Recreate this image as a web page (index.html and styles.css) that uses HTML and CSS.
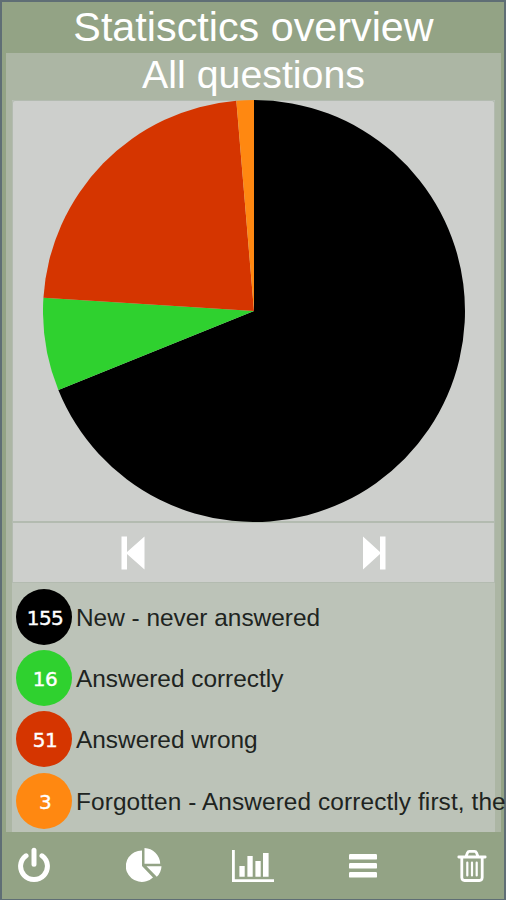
FILE: index.html
```
<!DOCTYPE html>
<html lang="en">
<head>
    <meta charset="UTF-8">
    <title>Statisctics overview</title>
    <link rel="stylesheet" href="styles.css">
</head>
<body>
    <div class="app">
        <h1>Statisctics overview</h1>

        <div class="panel">
            <h2>All questions</h2>
            <div class="content">
                <div class="chart">
                    <svg class="pie" viewBox="-100 -100 200 200">
                        <path fill="#000" d="M0 0V-100A100 100 0 1 1 -92.72 37.46Z"/>
                        <path fill="#2fd12f" d="M0 0L-92.72 37.46A100 100 0 0 1 -99.8 -6.28Z"/>
                        <path fill="#d53500" d="M0 0L-99.8 -6.28A100 100 0 0 1 -8.37 -99.65Z"/>
                        <path fill="#ff8811" d="M0 0L-8.37 -99.65A100 100 0 0 1 0 -100Z"/>
                    </svg>
                </div>

                <div class="nav">
                    <button>
                        <svg width="24" height="34" viewBox="0 0 24 34"><path d="M0.5 0.5h5.5v15.5L23.5 0.5v33L6 18v15.5H0.5z"/></svg>
                    </button>
                    <button>
                        <svg width="24" height="34" viewBox="0 0 24 34"><path d="M23.5 0.5H18v15.5L1 0.5v33L18 18v15.5h5.5z"/></svg>
                    </button>
                </div>

                <ul class="legend">
                    <li><span class="badge new">155</span><span class="label">New - never answered</span></li>
                    <li><span class="badge correct">16</span><span class="label">Answered correctly</span></li>
                    <li><span class="badge wrong">51</span><span class="label">Answered wrong</span></li>
                    <li><span class="badge forgotten">3</span><span class="label long">Forgotten - Answered correctly first, the</span></li>
                </ul>
            </div>
        </div>

        <div class="toolbar">
            <!-- Power -->
            <button>
                <svg width="32" height="38" viewBox="0 0 32 38"><path class="line" stroke-width="5" d="M8 8.8a13.4 13.2 0 1 0 16 0M16 3.2v14"/></svg>
            </button>
            <!-- Pie chart -->
            <button>
                <svg width="36" height="38" viewBox="0 0 36 38"><path d="M16 3.5V19L27 30.4A16 15.7 0 1 1 16 3.5zM18.5 1A16.5 16.5 0 0 1 34.2 16.7H18.5zM20.5 19.2h15a16 16 0 0 1-4.7 10.6z"/></svg>
            </button>
            <!-- Bar chart -->
            <button>
                <svg width="44" height="34" viewBox="0 0 44 34"><path d="M1 1h2.8v29.3H43V33H1zM8.4 17h5.3v10.8H8.4zM16.4 7h5.3v20.8h-5.3zM24.4 12h5.3v15.8h-5.3zM32 4h5.6v23.8H32z"/></svg>
            </button>
            <!-- Menu -->
            <button>
                <svg width="28" height="24" viewBox="0 0 28 24"><rect width="28" height="5.6" y="0" rx="1.2"/><rect width="28" height="5.6" y="9" rx="1.2"/><rect width="28" height="5.6" y="18" rx="1.2"/></svg>
            </button>
            <!-- Trash -->
            <button>
                <svg width="30" height="34" viewBox="0 0 30 34"><path class="line" stroke-width="2.8" d="M1.8 8h26.4M9 7.5L10.5 3.7Q11 2.4 12.4 2.4h5.2Q19 2.4 19.5 3.7L21 7.5M4.8 9v19.5Q5 31.5 7.5 31.5h15Q25 31.5 25.2 28.5V9"/><path class="line thin" d="M10.3 13.5v13M15 13.5v13M19.7 13.5v13"/></svg>
            </button>
        </div>
    </div>
</body>
</html>
```
FILE: styles.css
```
* { box-sizing: border-box; }
body { margin: 0; font-family: "Liberation Sans", Arial, sans-serif; overflow: hidden; }
h1, h2 { margin: 0; color: #fff; font-weight: normal; text-align: center; }
h1 { height: 51px; padding-left: 1px; font-size: 41.3px; line-height: 51px; }
h2 { height: 47px; font-size: 39.3px; line-height: 43px; }
button { display: flex; padding: 0; background: none; border: none; cursor: pointer; }
svg { display: block; fill: #fff; }
.line { fill: none; stroke: #fff; stroke-linecap: round; }
.thin { stroke-width: 2.2; }

.app { display: flex; flex-direction: column; width: 506px; height: 900px; background: #93a385; border: 2px solid #5f6e75; border-bottom-width: 1px; }
.panel { height: 779px; margin: 0 3px 0 4px; padding: 0 6px; background: #acb6a4; }
.content { height: 732px; background: #bcc3b8; }

.chart { height: 421px; background: #cdcfcc; border: 1px solid #b3bbb0; border-bottom: none; border-radius: 3px 3px 0 0; }
.pie { width: 422px; height: 422px; margin: -1px auto 0; }
.nav { display: flex; justify-content: space-around; align-items: center; height: 62px; background: #cdcfcc; border: 1px solid #b3bbb0; border-top-width: 2px; }

.legend { list-style: none; margin: 0; padding: 3px 0 0 4px; }
.legend li { display: flex; align-items: center; height: 61.3px; }
.label { padding-top: 2px; font-size: 24.4px; line-height: 30px; color: #20241f; white-space: nowrap; }
.long { letter-spacing: 0.1px; }
.badge { flex: none; width: 56px; height: 56px; margin-right: 4px; padding-left: 2px; border-radius: 50%; color: #fff; font: 20px/58px "DejaVu Sans", sans-serif; letter-spacing: -0.5px; -webkit-text-stroke: 0.4px #fff; text-align: center; }
.new { background: #000; }
.correct { background: #2fd12f; }
.wrong { background: #d53500; }
.forgotten { background: #ff8811; }

.toolbar { display: flex; flex: 1; justify-content: space-between; align-items: center; padding: 0 10px; }
.toolbar button { width: 44px; justify-content: center; align-items: center; }
```
